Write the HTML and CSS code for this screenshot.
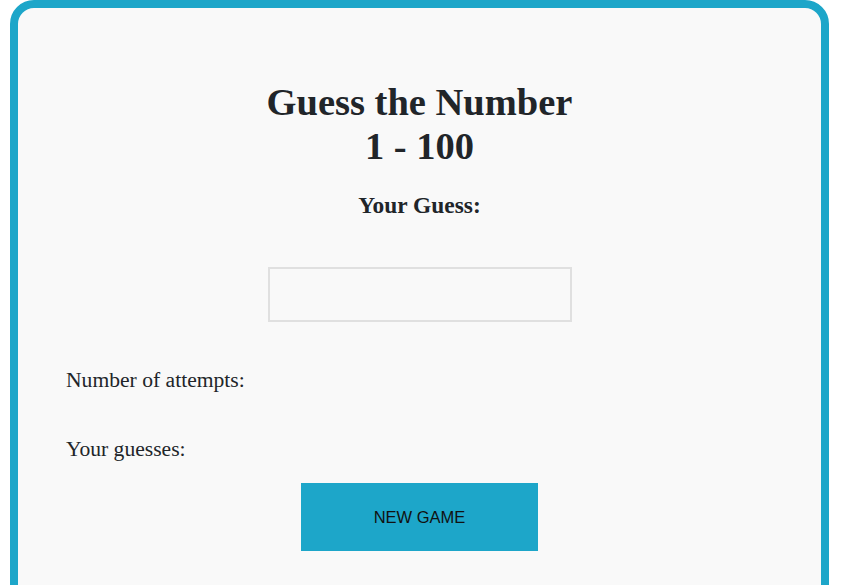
FILE: index.html
```html
<!DOCTYPE html>
<html lang="en">
<head>
<meta charset="utf-8">
<title>Guess the Number</title>
<link rel="stylesheet" href="styles.css">
</head>
<body>
<main class="card">
  <h1 class="title">Guess the Number<br>1 - 100</h1>
  <h2 class="label">Your Guess:</h2>
  <input class="guess-input" type="text" aria-label="Your guess">
  <p class="stat stat-attempts">Number of attempts:</p>
  <p class="stat stat-guesses">Your guesses:</p>
  <button class="new-game" type="button">NEW GAME</button>
</main>
</body>
</html>
```

FILE: styles.css
```css
html, body {
  margin: 0;
  padding: 0;
  background: #ffffff;
}

body {
  font-family: "Liberation Serif", "Times New Roman", serif;
  color: #212529;
}

.card {
  box-sizing: border-box;
  width: 819px;
  min-height: 700px;
  margin: 0 0 0 10px;
  border: 8px solid #1da6c9;
  border-radius: 24px;
  background: #f9f9f9;
  padding: 72px 48px 0;
  display: flex;
  flex-direction: column;
  align-items: center;
}

.title {
  margin: 0;
  font-size: 38.5px;
  line-height: 44px;
  font-weight: bold;
  text-align: center;
}

.label {
  margin: 24px 0 0;
  font-size: 23.4px;
  line-height: 27px;
  font-weight: bold;
  text-align: center;
}

.guess-input {
  box-sizing: border-box;
  margin: 48px 0 0;
  width: 304px;
  height: 55px;
  border: 2px solid #e0e0e0;
  background: #f9f9f9;
  outline: none;
  padding: 0 10px;
  font-size: 18px;
}

.stat {
  align-self: stretch;
  margin: 0;
  font-size: 21.6px;
  line-height: 25px;
  text-align: left;
}

.stat-attempts {
  margin-top: 46px;
}

.stat-guesses {
  margin-top: 44px;
}

.new-game {
  margin: 21px 0 0;
  width: 237px;
  height: 68px;
  border: none;
  background: #1da6c9;
  color: #111111;
  font-family: "Liberation Sans", Arial, sans-serif;
  font-size: 16.5px;
  cursor: pointer;
}
```
